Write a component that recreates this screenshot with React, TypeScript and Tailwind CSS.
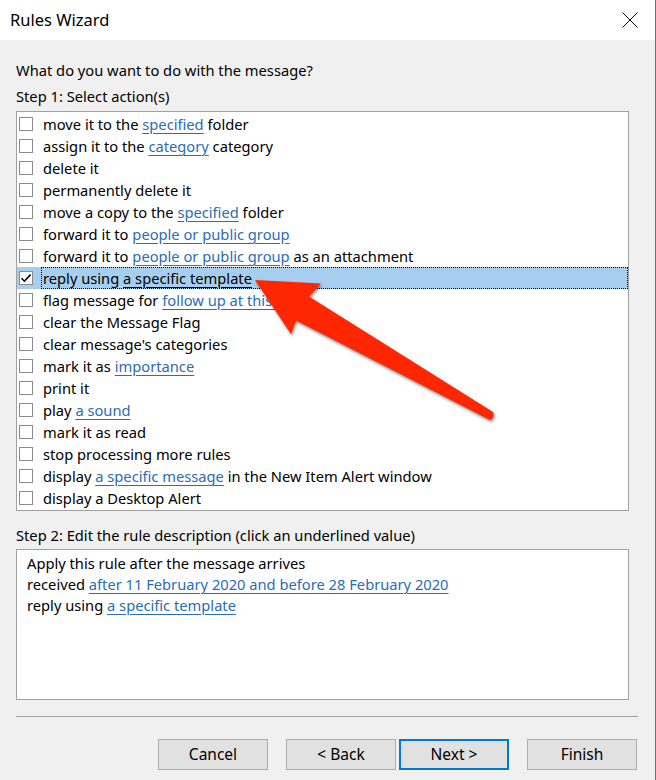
import React from "react";

type Seg = { t: string; link?: boolean };

const rows: Seg[][] = [
  [{ t: "move it to the " }, { t: "specified", link: true }, { t: " folder" }],
  [{ t: "assign it to the " }, { t: "category", link: true }, { t: " category" }],
  [{ t: "delete it" }],
  [{ t: "permanently delete it" }],
  [{ t: "move a copy to the " }, { t: "specified", link: true }, { t: " folder" }],
  [{ t: "forward it to " }, { t: "people or public group", link: true }],
  [{ t: "forward it to " }, { t: "people or public group", link: true }, { t: " as an attachment" }],
  [{ t: "reply using " }, { t: "a specific template", link: true }],
  [{ t: "flag message for " }, { t: "follow up at this time", link: true }],
  [{ t: "clear the Message Flag" }],
  [{ t: "clear message's categories" }],
  [{ t: "mark it as " }, { t: "importance", link: true }],
  [{ t: "print it" }],
  [{ t: "play " }, { t: "a sound", link: true }],
  [{ t: "mark it as read" }],
  [{ t: "stop processing more rules" }],
  [{ t: "display " }, { t: "a specific message", link: true }, { t: " in the New Item Alert window" }],
  [{ t: "display a Desktop Alert" }],
];

const SELECTED = 7;

function Checkbox({ checked }: { checked: boolean }) {
  return (
    <div className="w-[14px] h-[14px] border border-[#8a8a8a] bg-white shrink-0 flex items-center justify-center">
      {checked && (
        <svg width="12" height="12" viewBox="0 0 12 12">
          <path d="M1.5 6.2 L4.4 9.2 L10.5 2.6" fill="none" stroke="#000" strokeWidth="1.6" />
        </svg>
      )}
    </div>
  );
}

function Btn({ label, focused }: { label: string; focused?: boolean }) {
  return (
    <div
      className={
        "w-[110px] h-[31px] bg-[#e1e1e1] flex items-center justify-center text-[15.5px] text-black " +
        (focused ? "border-2 border-[#0078d7]" : "border border-[#adadad]")
      }
    >
      {label}
    </div>
  );
}

export default function App() {
  return (
    <div
      className="relative w-[656px] h-[780px] bg-[#f0f0f0] border-r border-[#6f6f6f] overflow-hidden text-black"
      style={{ fontFamily: '"Noto Sans", "Open Sans", sans-serif' }}
    >
      {/* title bar */}
      <div className="h-[40px] bg-white flex items-center justify-between pl-[10px] pr-[17px]">
        <span className="text-[16.5px] leading-none">Rules Wizard</span>
        <svg width="16" height="16" viewBox="0 0 16 16">
          <path d="M0.5 0.5 L15.5 15.5 M15.5 0.5 L0.5 15.5" stroke="#000" strokeWidth="1" />
        </svg>
      </div>

      <div className="pl-[16px] pr-[26px] pt-[19px] text-[14.7px]">
        <div className="h-[22px] leading-[22px]">What do you want to do with the message?</div>
        <div className="mt-[4px] h-[22px] leading-[22px]">Step 1: Select action(s)</div>

        <div className="mt-[4px] border border-[#a0a0a0] bg-white h-[400px] pt-[1px]">
          {rows.map((segs, i) => {
            const sel = i === SELECTED;
            return (
              <div
                key={i}
                className={"h-[22px] flex items-center pl-[2px] " + (sel ? "bg-[#a6cfef]" : "")}
              >
                <Checkbox checked={sel} />
                <div
                  className={
                    "ml-[8px] pl-[1px] h-[22px] flex items-center flex-1 whitespace-nowrap leading-[20px] " +
                    (sel ? "border border-dotted border-black" : "border border-transparent")
                  }
                >
                  {segs.map((s, j) =>
                    s.link ? (
                      <span
                        key={j}
                        className={
                          "underline underline-offset-[3px] " + (sel ? "text-black" : "text-[#2b6cb5]")
                        }
                      >
                        {s.t}
                      </span>
                    ) : (
                      <span key={j} className="whitespace-pre">{s.t}</span>
                    )
                  )}
                </div>
              </div>
            );
          })}
        </div>

        <div className="mt-[13px] h-[22px] leading-[22px]">
          Step 2: Edit the rule description (click an underlined value)
        </div>
        <div className="mt-[3px] border border-[#a0a0a0] bg-white h-[151px] pl-[10px] pt-[3px] leading-[21px]">
          <div>Apply this rule after the message arrives</div>
          <div>
            received{" "}
            <span className="underline underline-offset-[3px] text-[#2b6cb5]">
              after 11 February 2020 and before 28 February 2020
            </span>
          </div>
          <div>
            reply using{" "}
            <span className="underline underline-offset-[3px] text-[#2b6cb5]">a specific template</span>
          </div>
        </div>
      </div>

      <div className="ml-[16px] mr-[17px] mt-[16px] h-px bg-[#a0a0a0]" />

      <div className="flex justify-end pr-[18px] mt-[22px]">
        <Btn label="Cancel" />
        <div className="w-[18px]" />
        <Btn label="< Back" />
        <div className="w-[3px]" />
        <Btn label="Next >" focused />
        <div className="w-[18px]" />
        <Btn label="Finish" />
      </div>

      {/* red annotation arrow */}
      <svg
        className="absolute left-0 top-0 pointer-events-none"
        width="656"
        height="780"
        viewBox="0 0 656 780"
        style={{ filter: "drop-shadow(1px 2px 1.5px rgba(0,0,0,0.45))" }}
      >
        <path
          d="M255 280 L321 283.5 L309 296.5 L493 412 Q495 418 490 420 L296 320.5 L291 334 Z"
          fill="#ff2600"
        />
      </svg>
    </div>
  );
}
